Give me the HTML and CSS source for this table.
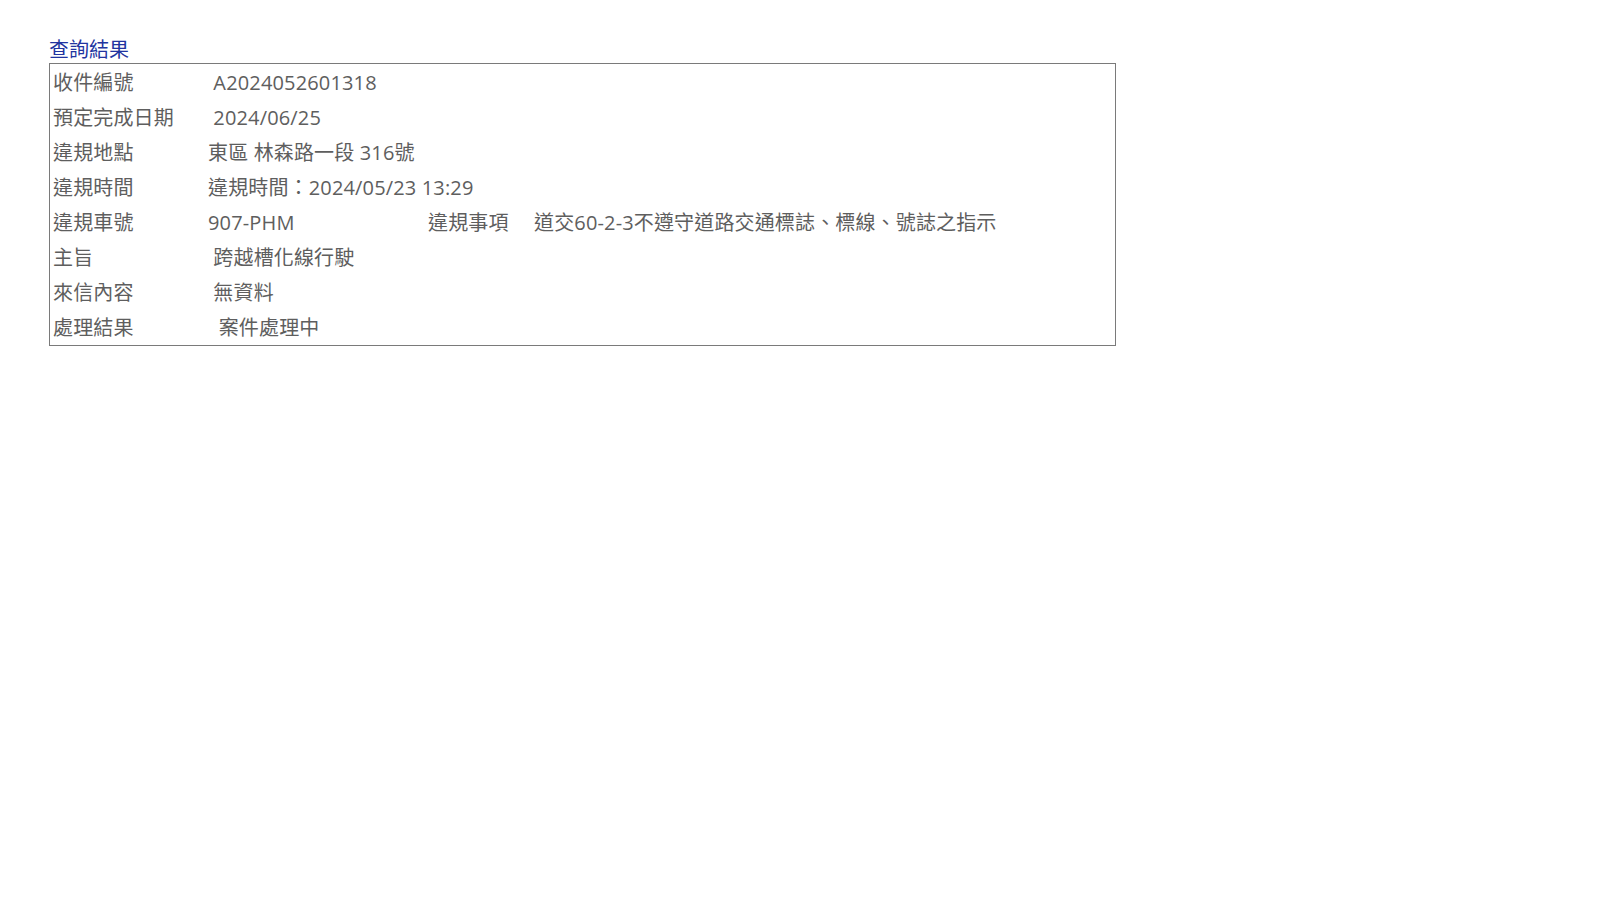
FILE: index.html
```html
<!DOCTYPE html>
<html lang="zh-Hant">
<head>
<meta charset="utf-8">
<title>查詢結果</title>
<link rel="stylesheet" href="styles.css">
</head>
<body>
<div class="page">
  <h2 class="title">查詢結果</h2>
  <div class="result">
    <div class="row"><div class="label">收件編號</div><div class="value">&nbsp;A2024052601318</div></div>
    <div class="row"><div class="label">預定完成日期</div><div class="value">&nbsp;2024/06/25</div></div>
    <div class="row"><div class="label">違規地點</div><div class="value">東區 林森路一段 316號</div></div>
    <div class="row"><div class="label">違規時間</div><div class="value">違規時間：2024/05/23 13:29</div></div>
    <div class="row">
      <div class="label">違規車號</div>
      <div class="value plate">907-PHM</div>
      <div class="label sub">違規事項</div>
      <div class="value">道交60-2-3不遵守道路交通標誌、標線、號誌之指示</div>
    </div>
    <div class="row"><div class="label">主旨</div><div class="value">&nbsp;跨越槽化線行駛</div></div>
    <div class="row"><div class="label">來信內容</div><div class="value">&nbsp;無資料</div></div>
    <div class="row"><div class="label">處理結果</div><div class="value">&nbsp;&nbsp;案件處理中</div></div>
  </div>
</div>
</body>
</html>
```

FILE: styles.css
```css
html, body {
  margin: 0;
  padding: 0;
  background: #ffffff;
}

body {
  font-family: "Open Sans", "Noto Sans CJK TC", sans-serif;
  color: #5e5e5e;
}

.page {
  padding: 37px 0 0 49px;
}

.title {
  margin: 0;
  font-size: 20px;
  font-weight: normal;
  line-height: 26px;
  color: #2234a0;
}

.result {
  width: 1065px;
  border: 1px solid #7a7a7a;
  padding-top: 1px;
}

.row {
  display: flex;
  height: 35px;
  align-items: center;
  font-size: 20px;
  line-height: 35px;
  letter-spacing: 0.15px;
}

.label {
  width: 155px;
  padding-left: 3px;
  flex: none;
  white-space: nowrap;
}

.value {
  white-space: nowrap;
}

.plate {
  width: 220px;
  flex: none;
}

.sub {
  width: 106px;
  padding-left: 0;
}
```
